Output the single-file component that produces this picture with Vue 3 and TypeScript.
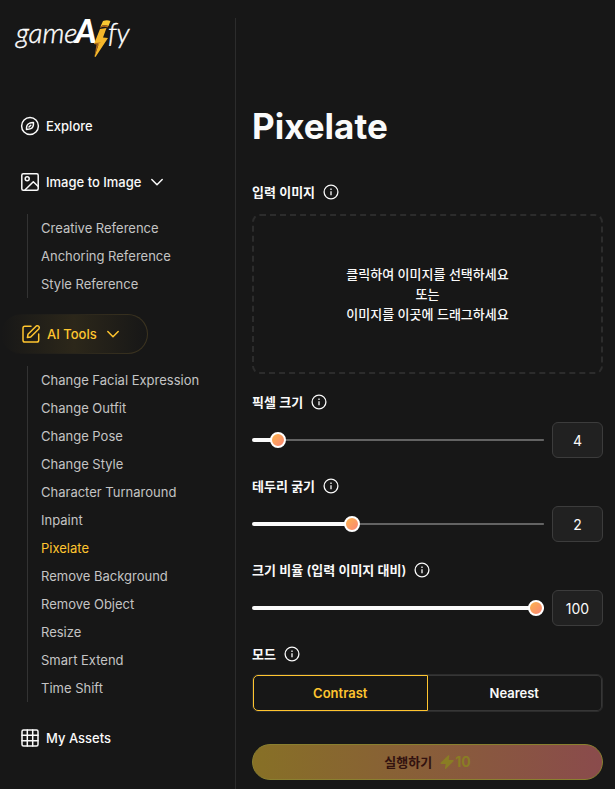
<script setup lang="ts">
import { computed, ref } from 'vue'

interface Setting {
  id: string
  label: string
  min: number
  max: number
  value: number
}

const referenceTools = ['Creative Reference', 'Anchoring Reference', 'Style Reference']
const aiTools = [
  'Change Facial Expression',
  'Change Outfit',
  'Change Pose',
  'Change Style',
  'Character Turnaround',
  'Inpaint',
  'Pixelate',
  'Remove Background',
  'Remove Object',
  'Resize',
  'Smart Extend',
  'Time Shift',
]
const modes = ['Contrast', 'Nearest']

const activeTool = ref('Pixelate')
const mode = ref('Contrast')
const imagesOpen = ref(true)
const toolsOpen = ref(true)
const settings = ref<Setting[]>([
  { id: 'pixel-size', label: '픽셀 크기', min: 2, max: 32, value: 4 },
  { id: 'outline', label: '테두리 굵기', min: 1, max: 4, value: 2 },
  { id: 'scale', label: '크기 비율 (입력 이미지 대비)', min: 1, max: 100, value: 100 },
])

const fills = computed(() =>
  settings.value.map((s) => `${((s.value - s.min) / (s.max - s.min)) * 100}%`),
)
</script>

<template>
  <div class="app">
    <aside class="sidebar">
      <a class="logo" href="#" aria-label="gameAify">
        <svg width="124" height="60" viewBox="0 -14 124 60">
          <text class="thin" x="1" y="27">game</text>
          <text class="heavy" x="60" y="27">A</text>
          <text class="thin" x="93" y="27">fy</text>
          <path d="M88 5 Q92 3.500 95.500 5 L93.500 10 Q89 8.500 85.500 10.500Z" fill="#f8c832" />
          <path d="M85.500 10.500 Q89 8.500 93.500 10 L92.500 11.500 Q89 10 85 12Z" fill="#b36a1c" />
          <path d="M85 13 L91.500 12 L88 21.500 L93 22 L80.500 41 L79.500 40.500 L83.500 28.500 L79 28Z" fill="#f4b72b" />
          <path d="M79 28 L83.500 28.500 L79.500 40.500 L81.500 28.500 L86 26.500 L80.500 27Z" fill="#a9661d" />
        </svg>
      </a>

      <nav class="nav">
        <a class="entry" href="#">
          <svg class="icon" viewBox="0 0 20 20">
            <circle cx="10" cy="10" r="8.400" />
            <path d="M13.500 6.500 C13.600 8.600 13 11.800 10.800 12.600 C9.500 13.200 7.900 13.400 6.500 13.500 C6.400 11.400 7 8.200 9.200 7.400 C10.500 6.800 12.100 6.600 13.500 6.500Z M9 11 L10.800 9.200" />
          </svg>
          <span>Explore</span>
        </a>

        <button class="entry" type="button" :aria-expanded="imagesOpen" @click="imagesOpen = !imagesOpen">
          <svg class="icon" viewBox="0 0 20 20">
            <rect x="1.800" y="1.800" width="16.400" height="16.400" rx="1.500" />
            <circle cx="7.200" cy="6.700" r="2" />
            <path d="M5.200 17.800 L13.300 9.700 L18 14.200" />
          </svg>
          <span>Image to Image</span>
          <svg class="icon" viewBox="0 0 20 20"><path d="M4.800 7.500 L10 12.700 L15.200 7.500" /></svg>
        </button>
        <ul v-show="imagesOpen" class="tools">
          <li v-for="tool in referenceTools" :key="tool"><a href="#">{{ tool }}</a></li>
        </ul>

        <button class="entry current" type="button" :aria-expanded="toolsOpen" @click="toolsOpen = !toolsOpen">
          <svg class="icon" viewBox="0 0 20 20">
            <path d="M10 2.300 H3.800 A1.800 1.800 0 0 0 2 4.100 V16.200 A1.800 1.800 0 0 0 3.800 18 H15.900 A1.800 1.800 0 0 0 17.700 16.200 V10" />
            <path d="M7 10.300 L15.300 2 Q16.600 1.200 17.700 2.300 Q18.800 3.400 18 4.700 L9.700 13 L6.400 13.600Z" />
          </svg>
          <span>AI Tools</span>
          <svg class="icon" viewBox="0 0 20 20"><path d="M4.800 7.500 L10 12.700 L15.200 7.500" /></svg>
        </button>
        <ul v-show="toolsOpen" class="tools">
          <li v-for="tool in aiTools" :key="tool">
            <a href="#" :class="{ active: tool === activeTool }" @click.prevent="activeTool = tool">{{ tool }}</a>
          </li>
        </ul>

        <a class="entry" href="#">
          <svg class="icon" viewBox="0 0 20 20">
            <rect x="2" y="2" width="16" height="16" rx="1.500" />
            <path d="M7.300 2 V18 M12.700 2 V18 M2 7.300 H18 M2 12.700 H18" />
          </svg>
          <span>My Assets</span>
        </a>
      </nav>
    </aside>

    <main class="panel">
      <h1>Pixelate</h1>

      <section class="upload">
        <div class="label">
          <label for="source">입력 이미지</label>
          <svg class="info" viewBox="0 0 16 16">
            <circle cx="8" cy="8" r="6.900" />
            <path d="M8 7.300 V11.200 M8 4.600 V6" />
          </svg>
        </div>
        <label class="dropzone" for="source">
          <input id="source" type="file" accept="image/*" />
          <span>클릭하여 이미지를 선택하세요</span>
          <span>또는</span>
          <span>이미지를 이곳에 드래그하세요</span>
        </label>
      </section>

      <section v-for="(s, i) in settings" :key="s.id" class="field">
        <div class="label">
          <label :for="s.id">{{ s.label }}</label>
          <svg class="info" viewBox="0 0 16 16">
            <circle cx="8" cy="8" r="6.900" />
            <path d="M8 7.300 V11.200 M8 4.600 V6" />
          </svg>
        </div>
        <div class="control">
          <input :id="s.id" v-model.number="s.value" type="range" :min="s.min" :max="s.max" :style="{ '--fill': fills[i] }" />
          <input v-model.number="s.value" class="number" type="text" inputmode="numeric" :aria-label="s.label" />
        </div>
      </section>

      <section class="field">
        <div class="label">
          <span id="mode-label">모드</span>
          <svg class="info" viewBox="0 0 16 16">
            <circle cx="8" cy="8" r="6.900" />
            <path d="M8 7.300 V11.200 M8 4.600 V6" />
          </svg>
        </div>
        <div class="segments" role="group" aria-labelledby="mode-label">
          <button v-for="m in modes" :key="m" type="button" :class="{ on: m === mode }" :aria-pressed="m === mode" @click="mode = m">
            {{ m }}
          </button>
        </div>
      </section>

      <button class="run" type="button" disabled>
        <span>실행하기</span>
        <span class="cost">
          <svg viewBox="0 0 14 16"><path d="M8.300 1.300 Q9.600 0.700 9.300 2.200 L8.700 6 H12.800 Q14.300 6.200 13.300 7.500 L6 14.700 Q4.700 15.500 5 14 L5.700 10 H1.300 Q-0.200 9.800 0.800 8.500Z" /></svg>
          <span>10</span>
        </span>
      </button>
    </main>
  </div>
</template>

<style>
body {
  background: #171717;
}
</style>

<style scoped>
* {
  box-sizing: border-box;
}

.app {
  display: grid;
  grid-template-columns: 236px minmax(0, 1fr);
  min-height: 100vh;
  padding-top: 18px;
  color: #fafafa;
  background: #171717;
  font-family: Inter, 'Noto Sans CJK KR', sans-serif;
  font-size: 14px;
  line-height: 20px;
}

button,
input {
  font: inherit;
  color: inherit;
}

a {
  color: inherit;
  text-decoration: none;
}

.sidebar {
  border-right: 1px solid #2c2c2c;
  font-size: 13px;
}

.logo {
  display: block;
  height: 44px;
  padding-left: 15px;
}

.logo svg {
  display: block;
  overflow: visible;
  margin-top: -16px;
}

.logo text {
  fill: #fff;
  font-family: Lato, sans-serif;
  font-style: italic;
}

.logo .thin {
  font-size: 28px;
  font-weight: 300;
  stroke: #fff;
  stroke-width: 0.4;
}

.logo .heavy {
  font-size: 33px;
  font-weight: 900;
}

.nav {
  display: flex;
  flex-direction: column;
  align-items: flex-start;
  padding-top: 60px;
}

.entry {
  display: flex;
  align-items: center;
  gap: 6px;
  height: 40px;
  padding: 0 24px 0 20px;
  border: 0;
  background: none;
  font-weight: 500;
  cursor: pointer;
}

.entry + .entry,
.tools + .entry {
  margin-top: 16px;
}

.icon {
  width: 20px;
  height: 20px;
  fill: none;
  stroke: currentColor;
  stroke-width: 1.5;
  stroke-linecap: round;
  stroke-linejoin: round;
}

.current {
  color: #ffc52f;
  border: 1px solid transparent;
  border-radius: 20px;
  background:
    linear-gradient(90deg, #171717, #2c271a 50%, #171717) padding-box,
    linear-gradient(90deg, #171717 5%, #3c3420) border-box;
}

.tools {
  margin: 12px 0 0 27px;
  padding: 0 0 0 13px;
  border-left: 1px solid #333;
  list-style: none;
  color: #c4c4c4;
}

.tools a {
  display: block;
  line-height: 28px;
}

.tools .active {
  color: #ffc52f;
}

.panel {
  display: flex;
  flex-direction: column;
  padding: 84px 12px 8px 16px;
}

h1 {
  margin: 0 0 30px;
  font-size: 35px;
  line-height: 48px;
  font-weight: 700;
}

.label {
  display: flex;
  align-items: center;
  gap: 8px;
  height: 24px;
  font-size: 13px;
  font-weight: 600;
}

.info {
  width: 16px;
  height: 16px;
  fill: none;
  stroke: currentColor;
  stroke-width: 1.3;
}

.upload,
.field {
  display: flex;
  flex-direction: column;
}

.upload {
  gap: 10px;
}

.field {
  gap: 8px;
  margin-top: 16px;
}

.dropzone {
  display: flex;
  flex-direction: column;
  align-items: center;
  justify-content: center;
  height: 160px;
  border: 2px dashed #2c2c2c;
  border-radius: 8px;
  font-size: 13px;
  font-weight: 500;
  cursor: pointer;
}

.dropzone input {
  position: absolute;
  width: 1px;
  height: 1px;
  opacity: 0;
}

.control {
  display: flex;
  align-items: center;
  gap: 8px;
  height: 36px;
}

input[type='range'] {
  flex: 1;
  min-width: 0;
  height: 16px;
  margin: 0;
  appearance: none;
  background: none;
}

input[type='range']::-webkit-slider-runnable-track {
  height: 4px;
  border-radius: 2px;
  background:
    linear-gradient(#fafafa, #fafafa) left center / var(--fill) 4px no-repeat,
    linear-gradient(#636363, #636363) left center / 100% 2px no-repeat;
}

input[type='range']::-webkit-slider-thumb {
  width: 16px;
  height: 16px;
  margin-top: -6px;
  appearance: none;
  border: 2px solid #fff;
  border-radius: 50%;
  background: linear-gradient(135deg, #fbbc45, #fb7d7d) border-box;
}

.number {
  width: 51px;
  height: 36px;
  padding: 0;
  border: 1px solid #3c3c3c;
  border-radius: 6px;
  background: #212121;
  text-align: center;
}

.segments {
  display: grid;
  grid-template-columns: 1fr 1fr;
  border: 1px solid #2c2c2c;
  border-radius: 6px;
}

.segments button {
  height: 36px;
  padding: 0;
  border: 1px solid #363636;
  background: none;
  font-size: 13px;
  font-weight: 600;
}

.segments button:first-child {
  border-radius: 5px 0 0 5px;
}

.segments button:last-child {
  border-left: 0;
  border-radius: 0 5px 5px 0;
}

.segments .on {
  border-color: #ffc52f;
  color: #ffc52f;
}

.run {
  display: flex;
  align-items: center;
  justify-content: center;
  gap: 8px;
  height: 36px;
  margin-top: 32px;
  border: 1px solid #8a8030;
  border-radius: 18px;
  background: linear-gradient(90deg, #877026, #8a4b4c);
  color: #32120f;
  font-size: 13px;
  font-weight: 700;
}

.cost {
  display: flex;
  align-items: center;
  gap: 1px;
  color: #8a7d24;
  font-size: 14px;
}

.cost svg {
  width: 14px;
  height: 16px;
  fill: currentColor;
}
</style>
